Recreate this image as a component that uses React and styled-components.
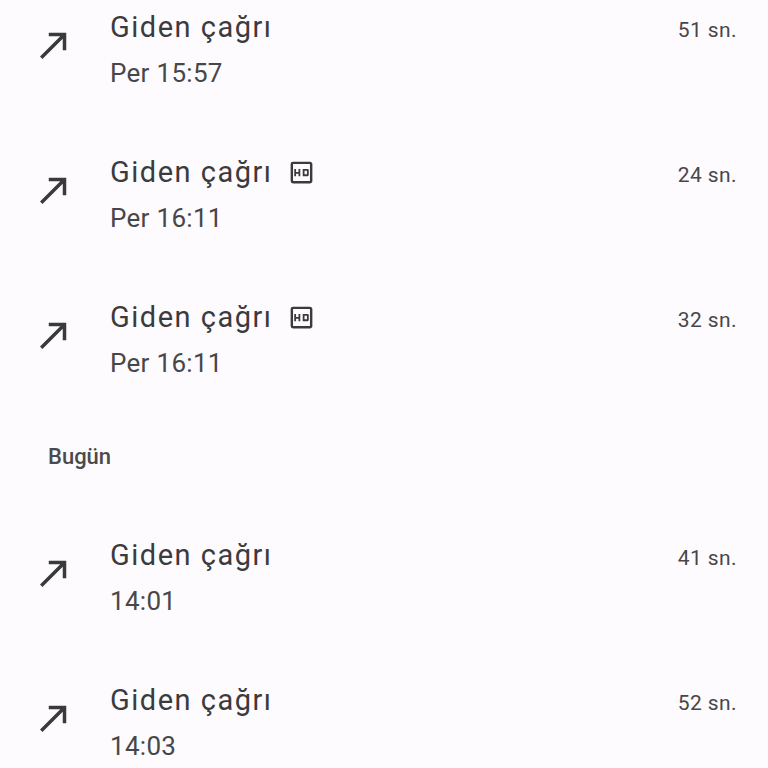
import React from "react";
import styled, { createGlobalStyle } from "styled-components";
import { MdOutlineHd } from "react-icons/md";

const Global = createGlobalStyle`
  html, body { margin: 0; padding: 0; background: #fdfbfe; }
  body { font-family: Roboto, "Noto Sans", sans-serif; overflow: hidden; }
`;

const List = styled.div`
  display: flex;
  flex-direction: column;
  margin-top: -22px;
`;

const Row = styled.div`
  display: flex;
  align-items: flex-start;
  height: 145px;
  box-sizing: border-box;
  padding: 32px 31px 0 33px;
`;

const IconBox = styled.div`
  width: 42px;
  height: 42px;
  margin-top: 14px;
  flex: none;
  color: #3a3a3c;
`;

const Texts = styled.div`
  display: flex;
  flex-direction: column;
  margin-left: 35px;
  flex: 1;
  gap: 12px;
`;

const TitleLine = styled.div`
  display: flex;
  align-items: center;
  gap: 14px;
  font-size: 29px;
  letter-spacing: 1.5px;
  line-height: 34px;
  color: #3b3b3d;
`;

const Sub = styled.div`
  font-size: 26px;
  letter-spacing: 0.3px;
  line-height: 34px;
  color: #47474a;
`;

const Duration = styled.div`
  font-size: 21px;
  letter-spacing: 0.4px;
  line-height: 34px;
  margin-top: 3px;
  color: #47474a;
  flex: none;
`;

const HdIcon = styled(MdOutlineHd)`
  width: 29px;
  height: 29px;
  color: #3b3b3d;
`;

const Header = styled.div`
  height: 93px;
  box-sizing: border-box;
  padding: 30px 0 0 48px;
  font-size: 22px;
  line-height: 28px;
  font-weight: 500;
  color: #4a4a4d;
`;

const Arrow = () => (
  <svg viewBox="0 0 24 24" width="42" height="42" fill="currentColor">
    <path d="M9 5v2h6.59L4 18.59 5.41 20 17 8.41V15h2V5z" />
  </svg>
);

const CallRow = ({ time, dur, hd }) => (
  <Row>
    <IconBox>
      <Arrow />
    </IconBox>
    <Texts>
      <TitleLine>
        Giden çağrı
        {hd && <HdIcon />}
      </TitleLine>
      <Sub>{time}</Sub>
    </Texts>
    <Duration>{dur}</Duration>
  </Row>
);

export default function App() {
  return (
    <>
      <Global />
      <List>
        <CallRow time="Per 15:57" dur="51 sn." />
        <CallRow time="Per 16:11" dur="24 sn." hd />
        <CallRow time="Per 16:11" dur="32 sn." hd />
        <Header>Bugün</Header>
        <CallRow time="14:01" dur="41 sn." />
        <CallRow time="14:03" dur="52 sn." />
      </List>
    </>
  );
}
